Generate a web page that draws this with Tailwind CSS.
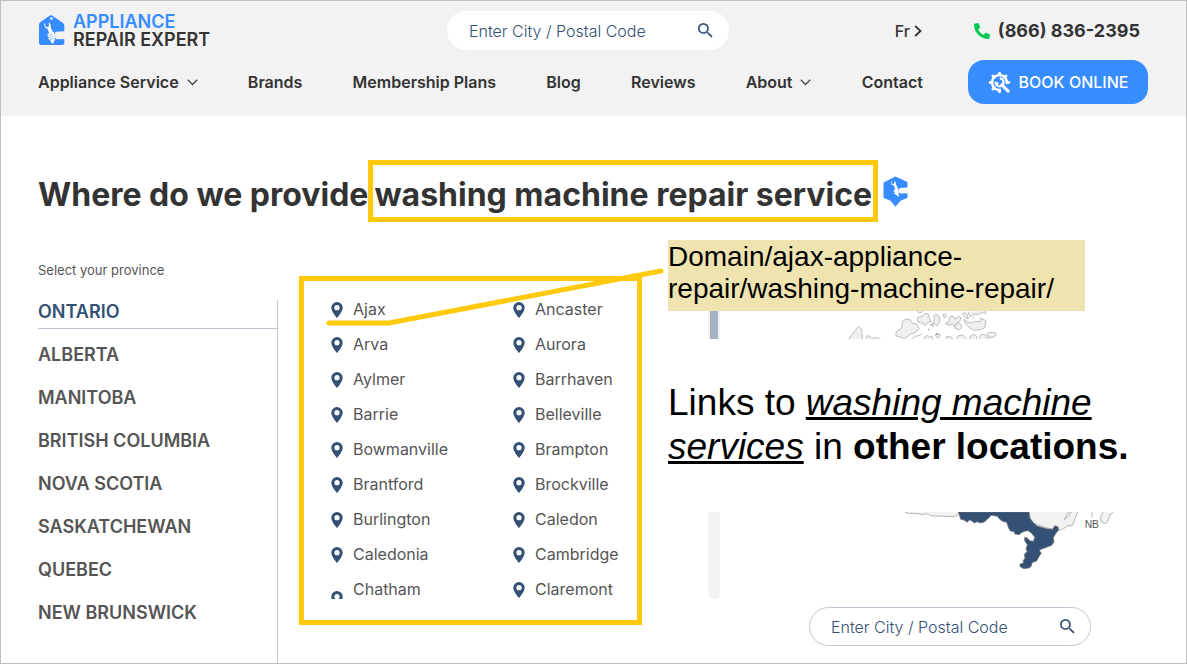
<!DOCTYPE html>
<html lang="en">
<head>
<meta charset="utf-8">
<meta name="viewport" content="width=device-width, initial-scale=1">
<title>Appliance Repair Expert</title>
<script src="https://cdn.jsdelivr.net/npm/@tailwindcss/browser@4"></script>
</head>
<body class="bg-white font-['Inter',sans-serif] text-[#333]">
<svg class="hidden" aria-hidden="true">
  <symbol id="search" viewBox="3 3 18 18"><path fill="currentColor" d="M15.5 14h-.79l-.28-.27A6.47 6.47 0 0 0 16 9.5 6.5 6.5 0 1 0 9.5 16c1.61 0 3.09-.59 4.23-1.57l.27.28v.79l5 4.99L20.49 19zm-6 0C7 14 5 12 5 9.500S7 5 9.500 5 14 7 14 9.500 12 14 9.500 14z"/></symbol>
  <symbol id="pin" viewBox="0 0 12 16"><path fill="#345075" fill-rule="evenodd" d="M6 0a5.700 5.700 0 0 0-5.700 5.700C.3 9.800 6 16 6 16s5.700-6.200 5.700-10.300A5.700 5.700 0 0 0 6 0zm0 3.100a2.600 2.600 0 1 1 0 5.200 2.600 2.600 0 0 1 0-5.200z"/></symbol>
  <symbol id="chevron" viewBox="0 0 11 7"><path fill="none" stroke="#444" stroke-width="1.300" d="M.8.8l4.700 4.700L10.200.8"/></symbol>
</svg>
<div class="flex min-h-screen flex-col border border-[#bfbfbf]">
  <header class="bg-[#f2f2f2] pt-[10px] pr-[38px] pb-3 pl-[37px]">
    <div class="flex h-[39px] items-center">
      <a href="#" class="flex w-[409px] items-center gap-2">
        <svg class="h-[31px] w-[27px]" viewBox="0 0 27 31">
          <path fill="#378cff" d="M11.500.8q1.500-.9 3 0L25 8q1.300 1 1.300 2.500v5.800l-8.500.5q-2 2-1.300 4.800.5 2.300 2.500 2.600l7.300-.2v3.500q0 2.500-2.500 2.500H3.500Q1 30 1 27.500V10Q1 8 2.500 7z"/>
          <circle cx="13.500" cy="3.500" r="1.200" fill="#fff"/>
          <path fill="#fff" d="M7 7.500l.5 4 2 .8 1.500-1.300-.4-3.800q2.800 1.800 2.100 5.100l2 4.700-3.200 1.800-2-5Q6.300 13 6.200 9.600zM9 19.200l5.400-3 2 1.700-.5 1.200 1 1-.6 1.300.9 1.200-.8 1.100.8 1.200-1.500 1 .2 2.200-2 .4-1.200-2.600-2.700-2.300 1-1-1.700-1.400 1.200-1z"/>
          <path stroke="#378cff" stroke-width=".6" fill="none" d="M11 20.500l3.200-1.500M11.500 22.700l3.200-1.500M12.300 24.700l2.800-1.300"/>
        </svg>
        <span class="text-[18px] leading-[18px] font-semibold"><span class="block text-[#378cff]">APPLIANCE</span><span class="block">REPAIR EXPERT</span></span>
      </a>
      <form class="flex h-[39px] w-[282px] items-center rounded-[20px] bg-white pr-4 pl-[22px] text-[#345075]">
        <input type="text" aria-label="City or postal code" placeholder="Enter City / Postal Code" class="min-w-0 flex-1 text-base font-light outline-none placeholder:text-[#345075]">
        <button type="button" aria-label="Search"><svg class="size-[15px]"><use href="#search"/></svg></button>
      </form>
      <div class="ml-auto flex items-center gap-[52px] pr-[8px]">
        <a href="#" class="flex items-center gap-1 text-base font-medium">Fr<svg class="h-3 w-2" viewBox="0 0 8 12"><path d="M1.200 1l5.300 5-5.300 5" fill="none" stroke="#333" stroke-width="1.800"/></svg></a>
        <a href="#" class="flex items-center gap-2 text-lg font-bold"><svg class="size-4" viewBox="0 0 512 512"><path fill="#00c853" d="M497.390 361.800l-112-48a24 24 0 0 0-28 6.900l-49.600 60.600A370.660 370.660 0 0 1 130.600 204.110l60.600-49.600a23.940 23.940 0 0 0 6.900-28l-48-112A24.160 24.160 0 0 0 122.600.61l-104 24A24 24 0 0 0 0 48c0 256.500 207.900 464 464 464a24 24 0 0 0 23.400-18.600l24-104a24.290 24.290 0 0 0-14.010-27.600z"/></svg>(866) 836-2395</a>
      </div>
    </div>
    <nav class="mt-[10px] flex items-center gap-[45px] text-base font-semibold">
      <div class="flex flex-1 items-center justify-between">
        <a href="#" class="flex items-center gap-2">Appliance Service<svg class="h-[7px] w-[11px]"><use href="#chevron"/></svg></a>
        <a href="#">Brands</a>
        <a href="#">Membership Plans</a>
        <a href="#">Blog</a>
        <a href="#">Reviews</a>
        <a href="#" class="flex items-center gap-2">About<svg class="h-[7px] w-[11px]"><use href="#chevron"/></svg></a>
        <a href="#">Contact</a>
      </div>
      <button type="button" class="flex h-11 w-[180px] items-center justify-center gap-2 rounded-2xl bg-[#378cff] text-base font-medium text-white">
        <svg class="size-[23px]" viewBox="0 0 24 24" fill="none" stroke="#fff" stroke-linecap="round"><path stroke-linecap="butt" stroke-width="2.600" d="M19.600 13.500A7.800 7.800 0 1 0 13.500 19.600"/><path stroke-width="3" d="M12 4V2.300M12 20.500v1.200M4 12H2.300M20.500 12h1.200M6.400 6.400L5.200 5.200M17.600 6.400l1.200-1.200M6.400 17.600l-1.200 1.200"/><path stroke-linecap="butt" stroke-width="2.300" d="M12.300 7.700A3.900 3.900 0 0 1 14.800 14.600 3.900 3.900 0 0 1 8 12.300l2.800 1"/><path stroke-width="3.200" d="M14.500 14.500l6.500 6.500"/></svg>BOOK ONLINE</button>
    </nav>
  </header>

  <main class="flex flex-1 flex-col pt-11 pl-[37px]">
    <div class="flex items-center">
      <h1 class="flex items-center text-[32px] leading-[44px] font-bold whitespace-nowrap"><span class="pt-2">Where do we provide</span><span class="border-5 border-[#ffc90e] px-px pt-2">washing machine repair service</span></h1>
      <svg class="ml-[5px] h-[31px] w-[25px]" viewBox="0 0 25 31">
        <path fill="#378cff" d="M12.500.5L24.500 6v5.500l-7.500.5q-1.500 1.500-1.200 3.500.3 1.500 1.700 2l7-.3v4.500L17.500 24.800 12.500 30.800 7.500 24.800.5 21.800V6.500z"/>
        <path fill="#fff" d="M8.200 4.500l.5 3 1.600.6 1.300-1-.2-2.700q2 1.500 1.500 4l2 3.500-2.300 1.500-1.800-4q-2.700-.5-3-3zM10.500 14l3.700-2 1.500 1.400-.5 1 1 .8-.8 1 .8 1-1 .9 1.200 1.800-1.400.5-1.700-1.500-2.500-1.600 1.300-.8-1.600-.9 1.200-.8z"/>
      </svg>
    </div>

    <div class="mt-[18px] flex flex-1">
      <section class="flex w-[240px] flex-col pt-5">
        <h2 class="text-[13px] leading-5 text-[#555]">Select your province</h2>
        <ul class="mt-5 flex-1 border-r border-[#c0c8d6] text-lg font-semibold text-[#555]">
          <li class="mb-1 h-[29px] border-b border-[#c0c8d6] leading-[23px] text-[#345075]"><a href="#">ONTARIO</a></li>
          <li class="leading-[43px]"><a href="#">ALBERTA</a></li>
          <li class="leading-[43px]"><a href="#">MANITOBA</a></li>
          <li class="leading-[43px]"><a href="#">BRITISH COLUMBIA</a></li>
          <li class="leading-[43px]"><a href="#">NOVA SCOTIA</a></li>
          <li class="leading-[43px]"><a href="#">SASKATCHEWAN</a></li>
          <li class="leading-[43px]"><a href="#">QUEBEC</a></li>
          <li class="leading-[43px]"><a href="#">NEW BRUNSWICK</a></li>
        </ul>
      </section>

      <section class="relative mt-9 ml-[21px] w-[343px] self-start border-5 border-[#ffc90e] pt-[11px] pb-[13px] pl-[27px]">
        <ul class="grid grid-cols-[182px_1fr] text-base leading-[35px] text-[#555]">
          <li><a href="#" class="flex items-center gap-[10px]"><svg class="h-4 w-3"><use href="#pin"/></svg>Ajax</a></li>
          <li><a href="#" class="flex items-center gap-[10px]"><svg class="h-4 w-3"><use href="#pin"/></svg>Ancaster</a></li>
          <li><a href="#" class="flex items-center gap-[10px]"><svg class="h-4 w-3"><use href="#pin"/></svg>Arva</a></li>
          <li><a href="#" class="flex items-center gap-[10px]"><svg class="h-4 w-3"><use href="#pin"/></svg>Aurora</a></li>
          <li><a href="#" class="flex items-center gap-[10px]"><svg class="h-4 w-3"><use href="#pin"/></svg>Aylmer</a></li>
          <li><a href="#" class="flex items-center gap-[10px]"><svg class="h-4 w-3"><use href="#pin"/></svg>Barrhaven</a></li>
          <li><a href="#" class="flex items-center gap-[10px]"><svg class="h-4 w-3"><use href="#pin"/></svg>Barrie</a></li>
          <li><a href="#" class="flex items-center gap-[10px]"><svg class="h-4 w-3"><use href="#pin"/></svg>Belleville</a></li>
          <li><a href="#" class="flex items-center gap-[10px]"><svg class="h-4 w-3"><use href="#pin"/></svg>Bowmanville</a></li>
          <li><a href="#" class="flex items-center gap-[10px]"><svg class="h-4 w-3"><use href="#pin"/></svg>Brampton</a></li>
          <li><a href="#" class="flex items-center gap-[10px]"><svg class="h-4 w-3"><use href="#pin"/></svg>Brantford</a></li>
          <li><a href="#" class="flex items-center gap-[10px]"><svg class="h-4 w-3"><use href="#pin"/></svg>Brockville</a></li>
          <li><a href="#" class="flex items-center gap-[10px]"><svg class="h-4 w-3"><use href="#pin"/></svg>Burlington</a></li>
          <li><a href="#" class="flex items-center gap-[10px]"><svg class="h-4 w-3"><use href="#pin"/></svg>Caledon</a></li>
          <li><a href="#" class="flex items-center gap-[10px]"><svg class="h-4 w-3"><use href="#pin"/></svg>Caledonia</a></li>
          <li><a href="#" class="flex items-center gap-[10px]"><svg class="h-4 w-3"><use href="#pin"/></svg>Cambridge</a></li>
          <li><a href="#" class="flex items-center gap-[10px]"><span class="h-[18px] w-3 overflow-hidden pt-[10px]"><svg class="h-4 w-3"><use href="#pin"/></svg></span>Chatham</a></li>
          <li><a href="#" class="flex items-center gap-[10px]"><svg class="h-4 w-3"><use href="#pin"/></svg>Claremont</a></li>
        </ul>
        <svg class="pointer-events-none absolute top-0 left-0 overflow-visible" width="358" height="45" fill="none" stroke="#ffc90e" stroke-width="5" stroke-linecap="round" stroke-linejoin="round"><path d="M25 42H85L357-10"/></svg>
      </section>

      <section class="ml-[26px] min-w-0 flex-1 font-['Liberation_Sans',sans-serif] text-black">
        <p class="h-[71px] w-[417px] bg-[#efe4b0] pt-px text-[28px] leading-8">Domain/ajax-appliance-<br>repair/washing-machine-repair/</p>
        <div class="flex pl-10">
          <div class="h-7 w-3 bg-[#f2f2f2] px-[2px]"><div class="h-full bg-[#a4b2c3]"></div></div>
          <svg class="ml-[127px] h-7 w-[150px]" viewBox="440 33 450 84" fill="#f0f0f0" stroke="#bdbdbd" stroke-width="3" stroke-linejoin="round">
            <path d="M444 119l18-24 12-15 10 8 3 31M497 119l3-12 10 2 4 6 14-2 16 6M586 101L592 92 604 84 606 66 614 58 628 58 636 70 650 73 656 86 646 97 630 103 613 116 600 112 588 108zM632 119l10-10 14-2 10-6M650 33l5 6 14-4M652 52l14-3 8-9 10 2 4 14 4 8-10 4-6 8-10-6-14-4zM690 76l10-8 3-12-4-8 8-5 10 6 2 14-8 14-8-6-10 4zM728 44l8-3 3 8-8 4zM734 70l12-5 2-14 10-3 6 10 10-8 8 2-2 10-10 6-6 14-8-10-10 4zM764 76l8-9 10 7 2 10-8 5-12-4zM786 42l8-4 6 4 4 14-8-2zM803 36l6 14 12-8 14 2 8-6 14 2-2-10M790 58l10 8 14 2 12-4 14 1 4-8 12 4-1 20-12 8-22 2-14-8-10-10zM705 104l6-5 8 4-2 8-7 3zM670 119l4-9 8-4 6 6 6-4 4 9M736 119l4-10 12 2 8 8M768 119l6-12 14-2 10 10 4 4M806 119l4-10 12-6 8 8-2 8M836 119l4-14 12-2 6 8 12 6M858 104l10-7 16 1 4 7-10 7-12-1z"/>
            <path fill="#777" stroke="none" d="M708 101h4v4h-4zM817 50h3v3h-3zM840 54h3v3h-3zM683 87h3v3h-3zM696 76h3v4h-3z"/>
          </svg>
        </div>
        <p class="mt-[42px] text-[37px] leading-[44px] whitespace-nowrap">Links to <i class="underline decoration-[3px]">washing machine<br>services</i> in <b>other locations.</b></p>
        <div class="mt-[43px] flex pl-10">
          <div class="h-[87px] w-3 rounded-b-full bg-[#f2f2f2]"></div>
          <svg class="ml-[185px] h-[58px] w-[210px]" viewBox="75 36 630 174" stroke-linejoin="round">
            <path fill="#f2f2f2" stroke="#b5b5b5" stroke-width="3" d="M75 36L85 40 113 41 127 44 137 41 146 44 151 47 166 48 223 50 231 47 239 36M446 36L452 58 462 70 500 84 524 88 536 90 548 88 562 78 578 76 588 48 593 36M552 60L566 36H574L566 48zM636 36V53M700 37L692 42 682 66 676 71 664 66 661 52 669 36"/>
            <path fill="#345075" stroke="#777" stroke-width="2" d="M235 36L242 58 252 60 262 67 268 60 276 63 283 69 292 65 300 69 312 67 322 58 330 50 333 46 352 49 358 57 370 65 380 67 384 80 390 92 403 96 404 102 418 104 424 98 434 94 444 92 455 100 464 112 460 124 450 122 442 114 434 112 434 122 442 134 438 146 441 155 433 163 435 175 429 182 431 188 420 192 420 200 432 206 448 204 454 198 456 188 470 183 478 168 484 160 478 150 500 142 515 136 522 126 520 113 528 100 536 90 534 80 524 77 518 88 508 87 500 86 472 78 460 68 450 55 447 36z"/>
            <text x="614" y="84" font-family="Liberation Sans, sans-serif" font-size="31" fill="#555">NB</text>
          </svg>
        </div>
        <form class="mt-2 ml-[141px] flex h-[39px] w-[282px] items-center rounded-[20px] border border-[#c0c8d6] bg-white pr-[15px] pl-[21px] font-['Inter',sans-serif] text-[#345075]">
          <input type="text" aria-label="City or postal code" placeholder="Enter City / Postal Code" class="min-w-0 flex-1 text-base font-light outline-none placeholder:text-[#345075]">
          <button type="button" aria-label="Search"><svg class="size-[15px]"><use href="#search"/></svg></button>
        </form>
      </section>
    </div>
  </main>
</div>
</body>
</html>
